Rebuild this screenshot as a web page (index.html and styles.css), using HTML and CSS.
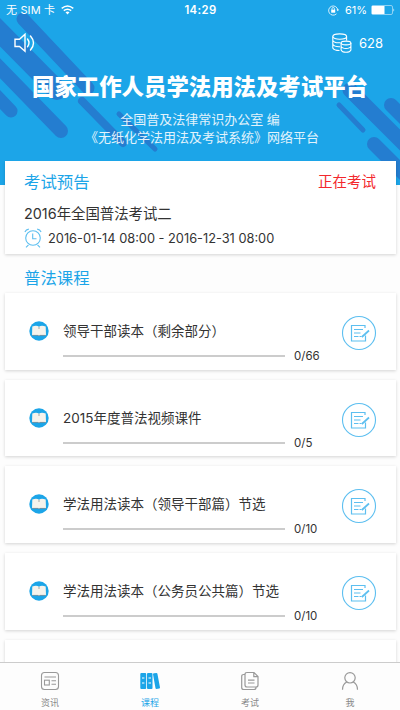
FILE: index.html
```html
<!DOCTYPE html>
<html lang="zh-CN">
<head>
<meta charset="utf-8">
<title>普法课程</title>
<link rel="stylesheet" href="styles.css">
</head>
<body>
<svg width="0" height="0" class="defs">
  <symbol id="book" viewBox="0 0 20 20"><circle cx="10" cy="10" r="9.7" fill="#1ca5e8"/><path d="M3.300 5.600Q7.500 3.800 10 5.700Q12.500 3.800 16.700 5.600L17 14.200H11L10 15L9 14.200H3Z" fill="#f6f3ec"/><path d="M10 6v2M3.200 14.400h6l.8.7.8-.7h6" fill="none" stroke="#777" stroke-width=".6"/></symbol>
  <symbol id="edit" viewBox="0 0 36 36"><g fill="none" stroke="#5dbff0"><circle cx="18" cy="18" r="16.500" stroke-width="1.100"/><path d="M24 13V10.500H10.500V26H24.500V20.500M13 14.500h9M13 18h6.500M13 21.500h4.500m1 0h2" stroke-width="1.200"/><path d="M28 15.500L22.500 20.500L20.800 22" stroke-width="1.700"/></g></symbol>
</svg>
<div class="screen">
  <header class="hero">
    <svg class="stripes" viewBox="0 0 400 185" fill="none" stroke="#247dd0" stroke-linecap="round">
      <path d="M23 19L88 88" stroke-width="13"/><path d="M-12 20L57 90" stroke-width="20"/>
      <path d="M-10 58L61 131" stroke-width="14"/><path d="M-10 89L11 111" stroke-width="13"/>
      <path d="M82 101L123 143" stroke-width="8"/><path d="M119 114L155 149" stroke-width="5"/>
      <path d="M350 90L410 150" stroke-width="15"/><path d="M339 105L363 130" stroke-width="5"/>
      <path d="M391 105L415 129" stroke-width="14"/><path d="M374 144L415 185" stroke-width="14"/>
    </svg>
    <div class="status">
      <div class="carrier"><span>无 SIM 卡</span>
        <svg width="13" height="10" viewBox="0 0 13 10" fill="none" stroke="#fff" stroke-width="1.500"><path d="M.7 3.400Q6.500-1.400 12.300 3.400M2.800 5.700Q6.500 2.700 10.200 5.700"/><path d="M4.500 7.300Q6.500 5.800 8.500 7.300L6.500 9.500Z" fill="#fff" stroke="none"/></svg>
      </div>
      <div class="time">14:29</div>
      <div class="power">
        <svg width="11" height="11" viewBox="0 0 11 11" fill="none" stroke="#fff" stroke-width=".8"><path d="M8.500 8.800A4.600 4.600 0 1 1 9.800 5"/><path d="M8.500 4.500h2.500L9.800 6.300Z" fill="#fff" stroke="none"/><rect x="3.200" y="4.700" width="4" height="3" fill="#fff" stroke="none"/><path d="M4 5V3.700a1.200 1.200 0 0 1 2.400 0V5"/></svg>
        <span>61%</span>
        <svg width="24" height="10" viewBox="0 0 24 10"><rect x=".5" y=".5" width="21" height="9" rx="1.500" fill="none" stroke="#a9dcf6" stroke-width=".8"/><rect x="1" y="1" width="12.500" height="8" fill="#fff"/><path d="M22.500 3.200Q24 5 22.500 6.800Z" fill="#fff"/></svg>
      </div>
    </div>
    <div class="tools">
      <svg width="22" height="20" viewBox="0 0 22 20" fill="none" stroke="#fff" stroke-width="1.400"><path d="M1 6.200H5.500L11 1.200V18.300L5.500 13.500H1Z"/><path d="M13.500 6Q16.500 9.800 13.500 13.800M16.500 3Q22.500 9.800 16.500 17" stroke-linecap="round"/></svg>
      <div class="coins">
        <svg width="20" height="20" viewBox="0 0 20 20" fill="none" stroke="#fff" stroke-width="1.100"><ellipse cx="7.700" cy="3.600" rx="6.900" ry="2.700"/><path d="M.8 3.600V15Q2 17.500 7.500 17.500M14.600 3.600V7.500M.8 7.500Q2.500 10.300 8.500 9.700M.8 11.300Q2.500 14 8 13.700"/><ellipse cx="14" cy="10" rx="4.900" ry="1.900"/><path d="M9.100 10V17Q10 19.200 14 19.200T18.900 17V10M9.100 13.400Q10 15.500 14 15.500T18.900 13.400"/></svg>
        <span>628</span>
      </div>
    </div>
    <h1>国家工作人员学法用法及考试平台</h1>
    <p class="sub">全国普及法律常识办公室 编</p>
    <p class="sub second">《无纸化学法用法及考试系统》网络平台</p>
  </header>
  <main>
    <section class="card notice">
      <div class="notice-head"><h2>考试预告</h2><span class="live">正在考试</span></div>
      <div class="exam">2016年全国普法考试二</div>
      <div class="when">
        <svg width="18" height="20" viewBox="0 0 18 20" fill="none" stroke="#5dbff0" stroke-width="1.100"><circle cx="9" cy="10" r="7.300"/><path d="M8.700 5.500V10.700H12.500M.9 4Q2 1.600 4.800 1.100M17.100 4Q16 1.600 13.200 1.100M4.500 16.800L2 19.300M13.500 16.800L16 19.300"/></svg>
        <span>2016-01-14 08:00 - 2016-12-31 08:00</span>
      </div>
    </section>
    <section class="courses">
      <h2>普法课程</h2>
      <article class="card row"><svg class="book"><use href="#book"/></svg><div class="info"><div class="name">领导干部读本（剩余部分）</div><div class="progress"><i></i><span>0/66</span></div></div><svg class="edit"><use href="#edit"/></svg></article>
      <article class="card row"><svg class="book"><use href="#book"/></svg><div class="info"><div class="name">2015年度普法视频课件</div><div class="progress"><i></i><span>0/5</span></div></div><svg class="edit"><use href="#edit"/></svg></article>
      <article class="card row"><svg class="book"><use href="#book"/></svg><div class="info"><div class="name">学法用法读本（领导干部篇）节选</div><div class="progress"><i></i><span>0/10</span></div></div><svg class="edit"><use href="#edit"/></svg></article>
      <article class="card row"><svg class="book"><use href="#book"/></svg><div class="info"><div class="name">学法用法读本（公务员公共篇）节选</div><div class="progress"><i></i><span>0/10</span></div></div><svg class="edit"><use href="#edit"/></svg></article>
      <article class="card row"></article>
    </section>
  </main>
  <nav>
    <a><svg viewBox="0 0 20 20" fill="none" stroke="#999" stroke-width="1.100"><rect x="1.500" y="1.500" width="17" height="17" rx="3"/><path d="M4.500 6h11.500M11.500 9.700h4.500M11.500 13.200h4.500"/><rect x="4.500" y="9.200" width="4.800" height="4.800"/></svg><span>资讯</span></a>
    <a class="active"><svg viewBox="0 0 20 20" fill="#1ca5e8"><rect x=".3" y="2" width="5.900" height="16" rx="1"/><rect x="7" y="2" width="5.500" height="16" rx="1"/><path d="M13 3.200Q13 2.300 14 2.200L16.500 2Q17.300 2 17.400 2.800L20 16.600Q20 17.500 19.200 17.600L16.500 18Q15.700 18 15.500 17.200Z"/><path d="M2 7h2.400M2 12h2.400M8.500 7h2.500M8.500 12h2.500" stroke="#fff" stroke-width="1"/></svg><span>课程</span></a>
    <a><svg viewBox="0 0 20 20" fill="none" stroke="#999" stroke-width="1.200"><path d="M7 1.500H14L18 5.500V14Q18 16 16 16H7Q5 16 5 14V3.500Q5 1.500 7 1.500ZM13.800 1.700V5.700H18M4.500 3.500H3.700Q1.700 3.500 1.700 5.500V16.500Q1.700 18.500 3.700 18.500H14Q16 18.500 16 16.500M8 9.200h6.500M8 12h6.500"/></svg><span>考试</span></a>
    <a><svg viewBox="0 0 20 20" fill="none" stroke="#999" stroke-width="1.200"><circle cx="10" cy="6.800" r="5.200"/><path d="M6.800 11Q2.500 13 2.500 18.700M13.200 11Q17.500 13 17.500 18.700"/></svg><span>我</span></a>
  </nav>
</div>
</body>
</html>
```
FILE: styles.css
```css
* { box-sizing: border-box; }
body { margin: 0; font-family: Inter, "Noto Sans CJK SC", sans-serif; color: #333; }
.defs { position: absolute; }
h1, h2, p { margin: 0; }
.screen { height: 710px; display: flex; flex-direction: column; overflow: hidden; background: #fdfdfd; }
.hero { position: relative; height: 185px; flex: none; background: #1ca5e8; color: #fff; }
.stripes { position: absolute; inset: 0; width: 400px; height: 185px; }
.status, .tools, .hero h1, .sub { position: relative; }
.status { height: 20px; padding: 0 5px 0 6px; display: grid; grid-template-columns: 1fr auto 1fr; align-items: center; font-size: 11px; line-height: 20px; }
.carrier, .power { display: flex; align-items: center; gap: 6px; }
.carrier { letter-spacing: .15px; }
.power { justify-content: flex-end; gap: 4px; }
.power span { margin-left: 2px; }
.time { font-weight: 600; font-size: 11.300px; letter-spacing: .4px; }
.tools { height: 45px; padding: 0 17px 0 14px; display: flex; align-items: center; justify-content: space-between; }
.coins { display: flex; align-items: center; gap: 7px; font-size: 13px; }
.hero h1 { height: 44px; line-height: 44px; text-align: center; font-size: 22.400px; font-weight: 900; white-space: nowrap; }
.sub { height: 18px; line-height: 18px; text-align: center; font-size: 13px; color: #e2f3fc; white-space: nowrap; }
.hero h1 + .sub { margin-top: 1px; }
.second { padding-left: 4px; }
main { flex: 1; min-height: 0; overflow: hidden; margin-top: -24px; position: relative; padding: 0 4px 0 5px; }
.card { background: #fff; box-shadow: 0 1px 3px rgba(0,0,0,.17); }
.notice { height: 93px; padding: 0 20px 0 19px; }
.notice-head { height: 39px; display: flex; align-items: center; justify-content: space-between; }
h2 { font-size: 16.400px; font-weight: 400; color: #1ca5e8; }
.live { color: #f3282d; font-size: 14.500px; }
.exam { height: 28px; line-height: 28px; font-size: 14.400px; }
.when { height: 20px; display: flex; align-items: center; gap: 6px; font-size: 12.800px; white-space: nowrap; }
.courses { padding-top: 3px; }
.courses h2 { height: 36px; line-height: 42px; padding-left: 19px; }
.row { height: 76.500px; margin-bottom: 10.200px; padding: 0 19px 0 24px; display: flex; }
.book { width: 20px; height: 20px; margin-top: 28px; flex: none; }
.info { width: 292px; padding: 28px 0 0 14px; flex: none; }
.name { height: 20px; line-height: 20px; font-size: 13.500px; white-space: nowrap; }
.progress { display: flex; align-items: center; gap: 9px; height: 14px; margin-top: 8px; font-size: 11.500px; }
.progress i { width: 222px; height: 2px; background: #ccc; }
.edit { width: 36px; height: 36px; margin-top: 22px; flex: none; }
nav { height: 48px; flex: none; display: grid; grid-template-columns: repeat(4, 1fr); background: #fdfdfd; border-top: 1px solid #ccc; position: relative; }
nav a { display: flex; flex-direction: column; align-items: center; padding-top: 8px; color: #888; font-size: 9px; line-height: 15px; }
nav svg { width: 20px; height: 20px; margin-bottom: 4px; }
nav .active { color: #1ca5e8; }
```
